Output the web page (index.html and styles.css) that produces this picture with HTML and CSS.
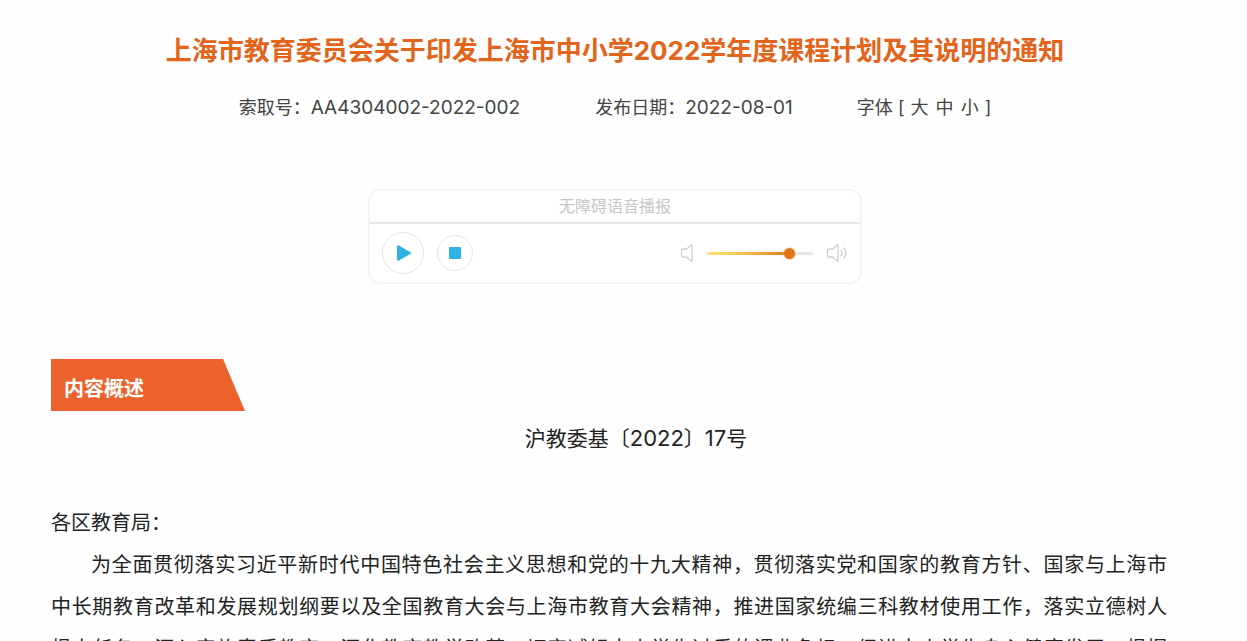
FILE: index.html
```html
<!DOCTYPE html>
<html lang="zh-CN">
<head>
<meta charset="utf-8">
<title>上海市教育委员会通知</title>
<link rel="stylesheet" href="styles.css">
</head>
<body>
<main class="page">
  <h1 class="title">上海市教育委员会关于印发上海市中小学2022学年度课程计划及其说明的通知</h1>
  <div class="meta">
    <span>索取号：<span class="number">AA4304002-2022-002</span></span>
    <span>发布日期：<span class="number">2022-08-01</span></span>
    <span class="sizes">字体 [ <button type="button">大</button> <button type="button">中</button> <button type="button">小</button> ]</span>
  </div>

  <section class="player" aria-label="无障碍语音播报">
    <div class="player-title">无障碍语音播报</div>
    <div class="controls">
      <button class="round play" type="button" aria-label="播放">
        <svg width="16" height="18" viewBox="0 0 16 18"><path d="M2 2.200v13.600L14 9z" fill="#2db3e4" stroke="#2db3e4" stroke-width="2" stroke-linejoin="round"/></svg>
      </button>
      <button class="round stop" type="button" aria-label="停止">
        <svg width="12" height="12" viewBox="0 0 12 12"><rect width="12" height="12" rx="1" fill="#2db3e4"/></svg>
      </button>
      <div class="volume">
        <svg width="14" height="20" viewBox="0 0 14 20" fill="none" stroke="#cfcfcf" stroke-width="1.3" stroke-linejoin="round"><path d="M12 1.500v17L6.500 14H3.500Q1.500 14 1.500 12V8Q1.500 6 3.500 6H6.500z"/></svg>
        <input class="slider" type="range" min="0" max="100" value="81" aria-label="音量">
        <svg width="22" height="20" viewBox="0 0 22 20" fill="none" stroke="#cfcfcf" stroke-width="1.3" stroke-linejoin="round" stroke-linecap="round"><path d="M12 1.500v17L6.500 14H3.500Q1.500 14 1.500 12V8Q1.500 6 3.500 6H6.500z"/><path d="M15 7q2 3 0 6M18 5q4 5 0 10"/></svg>
      </div>
    </div>
  </section>

  <h2 class="section-label">内容概述</h2>
  <article class="article">
    <p class="doc-number">沪教委基〔<span class="digits">2022</span>〕<span class="digits">17</span>号</p>
    <p class="recipient">各区教育局：</p>
    <p class="body-text">为全面贯彻落实习近平新时代中国特色社会主义思想和党的十九大精神，贯彻落实党和国家的教育方针、国家与上海市<br>中长期教育改革和发展规划纲要以及全国教育大会与上海市教育大会精神，推进国家统编三科教材使用工作，落实立德树人<br>根本任务，深入实施素质教育，深化教育教学改革，切实减轻中小学生过重的课业负担，促进中小学生身心健康发展，根据</p>
  </article>
</main>
</body>
</html>
```
FILE: styles.css
```css
* {
  box-sizing: border-box;
}

html {
  overflow: hidden;
}

body {
  margin: 0;
  background: #fefefe;
  color: #222;
  font-family: Inter, "Noto Sans CJK SC", sans-serif;
}

button {
  padding: 0;
  border: 0;
  background: none;
  color: inherit;
  font: inherit;
  cursor: pointer;
}

.page {
  padding: 31px 68px 0 51px;
}

.title {
  margin: 0;
  color: #e2651b;
  font-size: 26px;
  line-height: 40px;
  font-weight: 700;
  text-align: center;
}

.meta {
  display: flex;
  justify-content: center;
  gap: 64px;
  margin-top: 22px;
  color: #444;
  font-size: 18px;
  line-height: 30px;
}

.meta > :first-child {
  margin-right: 11px;
}

.number {
  font-size: 19px;
}

.sizes button {
  padding: 0 1px;
}

.player {
  width: 494px;
  max-width: 100%;
  margin: 66px auto 0;
  border: 2px solid #f4f4f4;
  border-radius: 12px;
  background: #fff;
}

.player-title {
  border-bottom: 2px solid #e6e6e6;
  color: #c6c6c6;
  font-size: 16px;
  line-height: 31px;
  text-align: center;
}

.controls {
  display: flex;
  align-items: center;
  gap: 13px;
  padding: 8px 12px;
}

.round {
  display: flex;
  align-items: center;
  justify-content: center;
  border: 1px solid #e6e6e6;
  border-radius: 50%;
}

.play {
  width: 42px;
  height: 42px;
}

.play svg {
  margin-left: 2px;
}

.stop {
  width: 36px;
  height: 36px;
}

.volume {
  display: flex;
  align-items: center;
  gap: 13px;
  margin-left: auto;
}

.slider {
  width: 106px;
  height: 20px;
  margin: 0;
  appearance: none;
  background: none;
}

.slider::-webkit-slider-runnable-track {
  height: 3px;
  border-radius: 2px;
  background: linear-gradient(to right, #ffe27a, #f3bd48 38%, #dc7a20 77%, #e6e6e6 77%);
}

.slider::-webkit-slider-thumb {
  width: 11px;
  height: 11px;
  margin-top: -4px;
  appearance: none;
  border-radius: 50%;
  background: #e37619;
  box-shadow: 0 0 3px #f6b27a;
}

.section-label {
  width: 194px;
  margin: 75px 0 0;
  padding: 8px 13px 0;
  background: #eb622c;
  clip-path: polygon(0 0, 172px 0, 100% 100%, 0 100%);
  color: #fff;
  font-size: 20px;
  line-height: 44px;
  font-weight: 700;
}

.article {
  padding-right: 12px;
  font-size: 20px;
  line-height: 42px;
}

.article p {
  margin: 0;
}

.article .doc-number {
  margin: 6px -12px 42px 0;
  font-size: 21px;
  text-align: center;
  text-indent: 2em;
}

.digits {
  font-size: 22px;
}

.body-text {
  text-align: justify;
  text-align-last: justify;
  text-indent: 2em;
}
```
